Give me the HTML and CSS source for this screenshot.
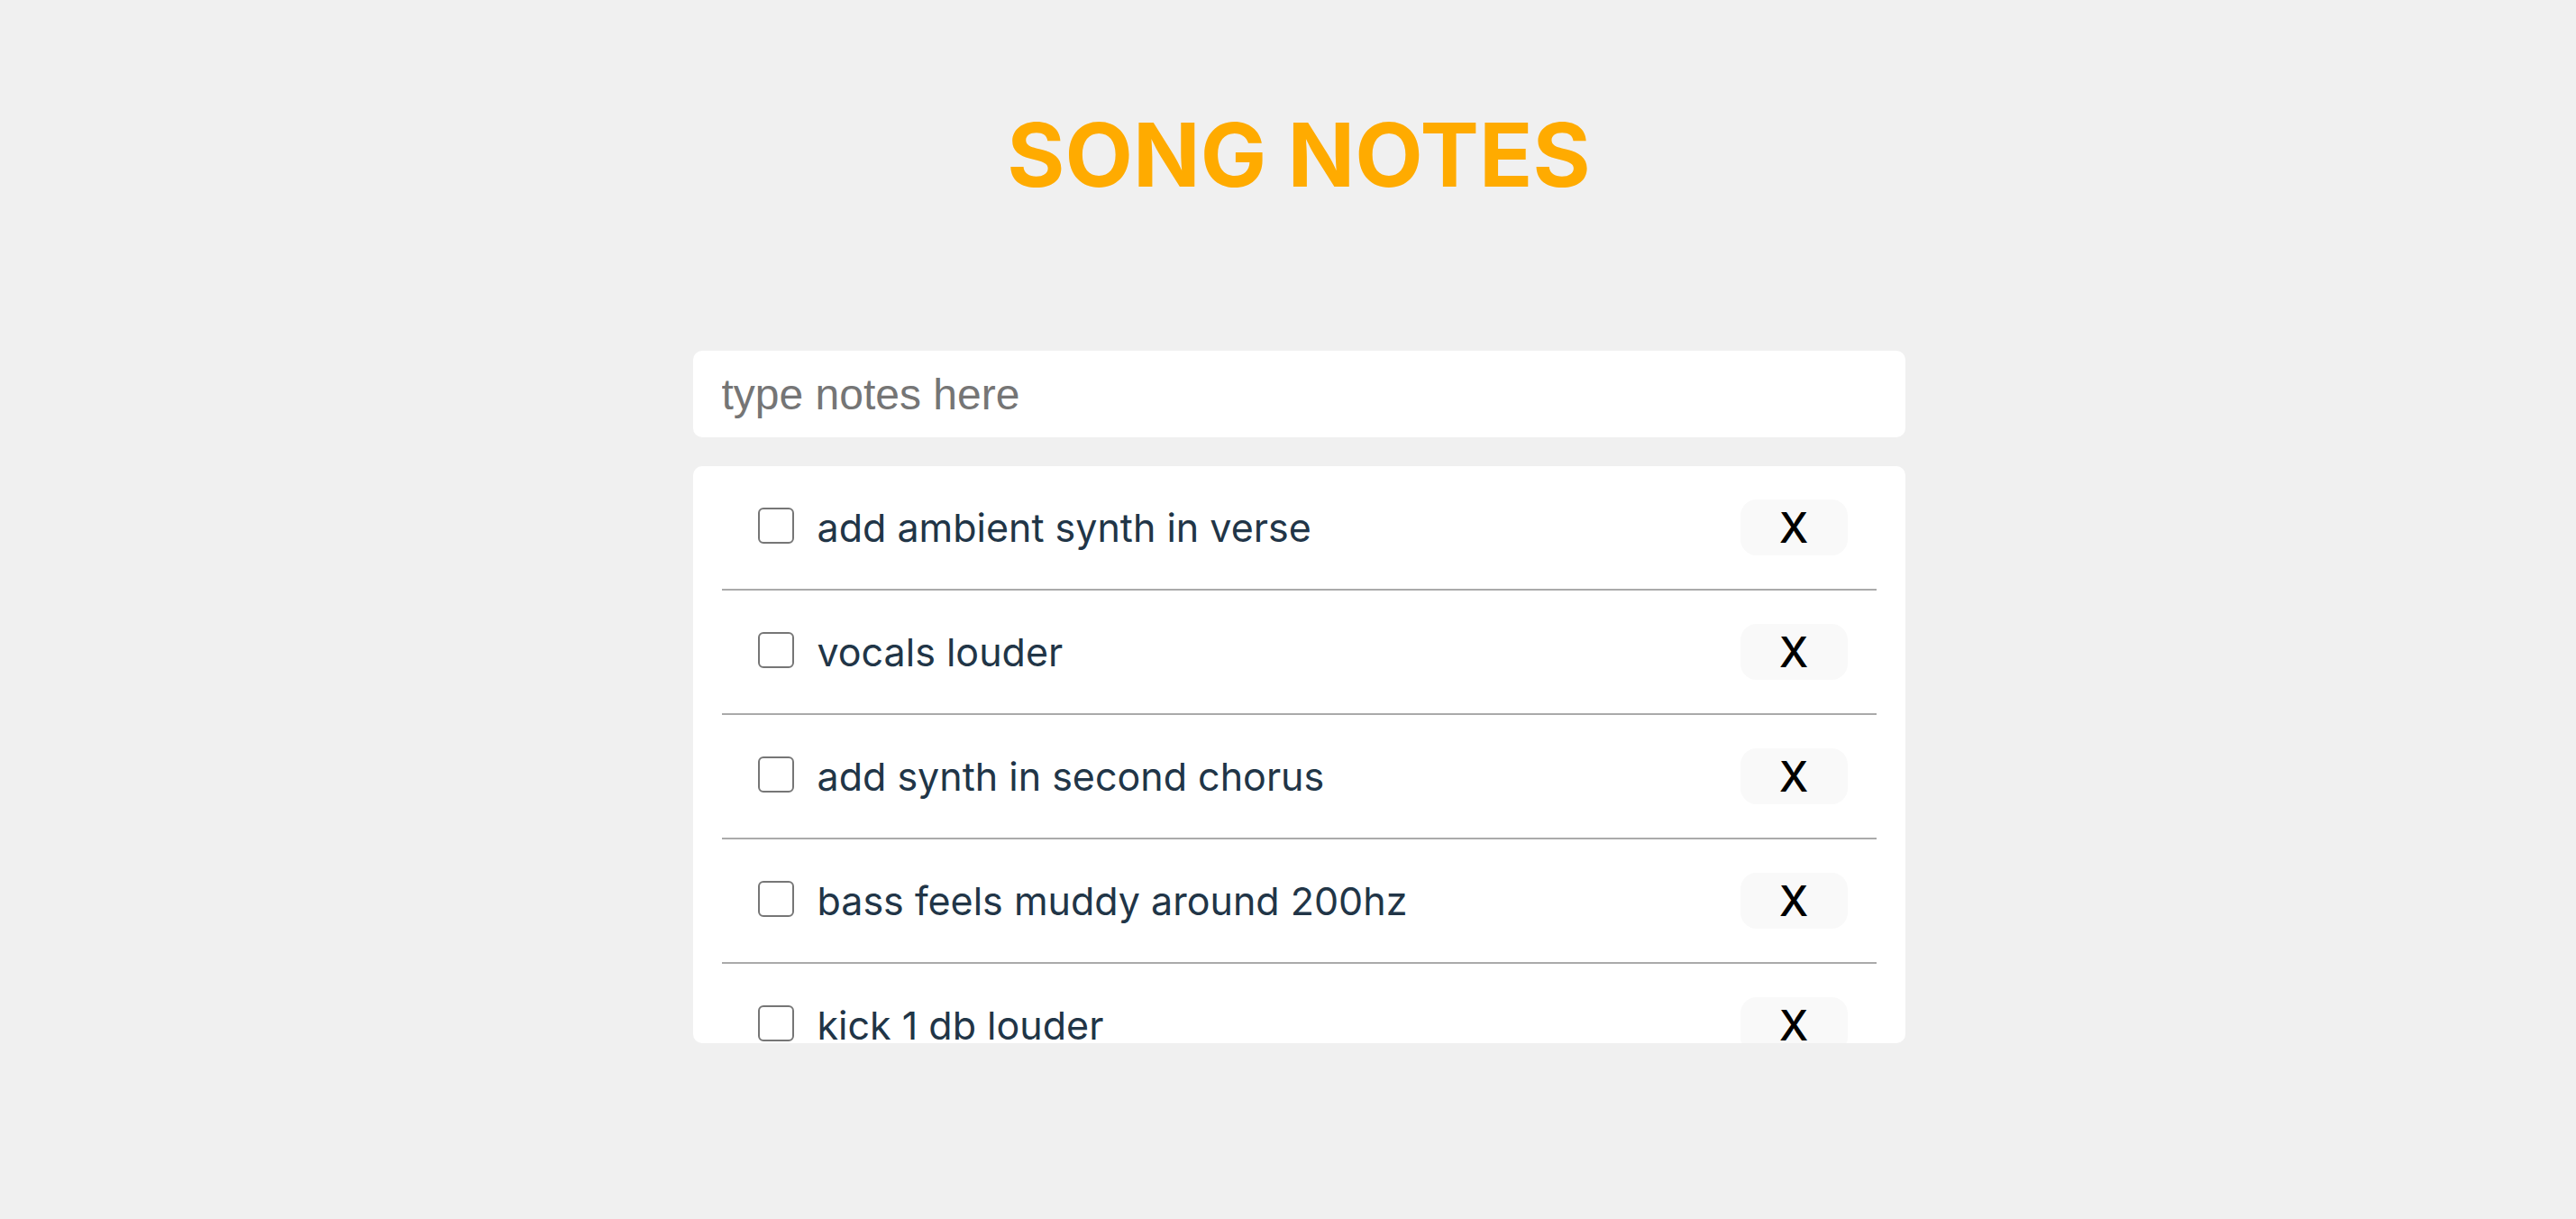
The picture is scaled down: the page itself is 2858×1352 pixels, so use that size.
FILE: index.html
```html
<!DOCTYPE html>
<html lang="en">
<head>
<meta charset="utf-8">
<title>Song Notes</title>
<link rel="stylesheet" href="styles.css">
</head>
<body>
<div class="app">
  <h1 class="title">SONG NOTES</h1>
  <input class="note-input" type="text" placeholder="type notes here">
  <ul class="note-list">
    <li class="note"><input class="check" type="checkbox"><span class="note-text">add ambient synth in verse</span><button class="del">X</button></li>
    <li class="note"><input class="check" type="checkbox"><span class="note-text">vocals louder</span><button class="del">X</button></li>
    <li class="note"><input class="check" type="checkbox"><span class="note-text">add synth in second chorus</span><button class="del">X</button></li>
    <li class="note"><input class="check" type="checkbox"><span class="note-text">bass feels muddy around 200hz</span><button class="del">X</button></li>
    <li class="note"><input class="check" type="checkbox"><span class="note-text">kick 1 db louder</span><button class="del">X</button></li>
  </ul>
</div>
</body>
</html>
```

FILE: styles.css
```css
* { box-sizing: border-box; }
html, body {
  margin: 0;
  padding: 0;
  background: #f0f0f0;
}
body {
  font-family: Inter, "Noto Sans", sans-serif;
  color: #213547;
}
.app {
  width: 1345px;
  margin: 0 auto;
  position: relative;
  left: 12px;
  display: flex;
  flex-direction: column;
  padding-top: 111px;
}
.title {
  margin: 0 0 157px;
  text-align: center;
  font-family: Inter, "Liberation Sans", sans-serif;
  font-weight: 700;
  font-size: 98px;
  line-height: 121px;
  color: #ffab00;
}
.note-input {
  display: block;
  width: 100%;
  height: 96px;
  border: none;
  outline: none;
  border-radius: 10px;
  background: #fff;
  padding: 0 32px;
  font-family: "Liberation Sans", Arial, sans-serif;
  font-size: 48px;
  color: #213547;
}
.note-input::placeholder { color: #757575; }
.note-list {
  list-style: none;
  margin: 32px 0 0;
  padding: 0 32px;
  background: #fff;
  border-radius: 10px;
  height: 640px;
  overflow: hidden;
}
.note {
  display: flex;
  align-items: center;
  height: 138px;
  padding: 0 32px 0 40px;
  border-bottom: 2px solid #aaaaaa;
}
.check {
  appearance: none;
  -webkit-appearance: none;
  margin: 0;
  width: 40px;
  height: 40px;
  flex: none;
  border: 2px solid #767676;
  border-radius: 6px;
  background: #fff;
  position: relative;
  top: -2px;
}
.note-text {
  flex: 1;
  margin-left: 26px;
  font-size: 43px;
  line-height: 60px;
  color: #213547;
}
.del {
  flex: none;
  width: 119px;
  height: 62px;
  border: none;
  border-radius: 18px;
  background: #f9f9f9;
  font-family: Inter, "Liberation Sans", sans-serif;
  font-weight: 500;
  font-size: 46px;
  color: #000;
  display: flex;
  align-items: center;
  justify-content: center;
  padding: 0;
}
```
